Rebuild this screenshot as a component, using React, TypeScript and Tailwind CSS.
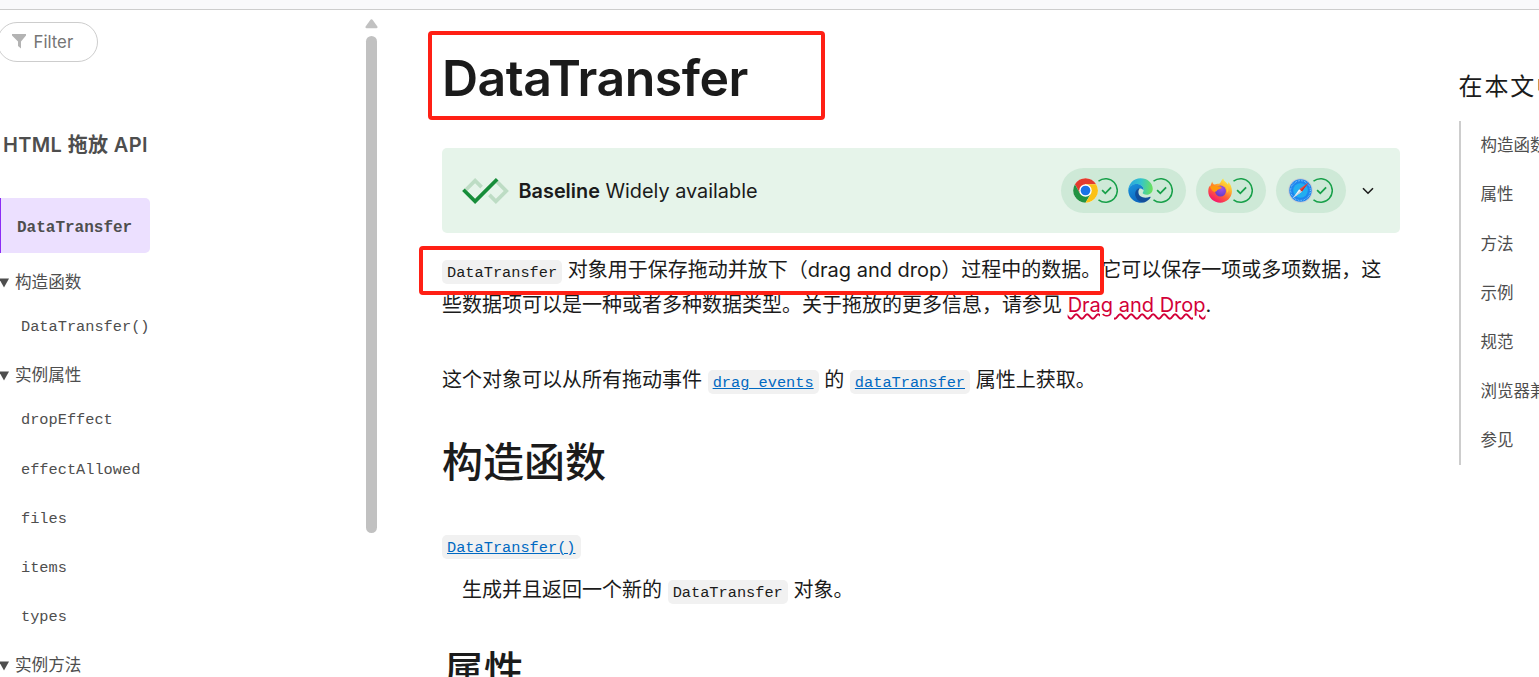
import React from 'react';

const TOC = ['构造函数', '属性', '方法', '示例', '规范', '浏览器兼容性', '参见'];

const SECTIONS = [
  { title: '构造函数', items: ['DataTransfer()'] },
  { title: '实例属性', items: ['dropEffect', 'effectAllowed', 'files', 'items', 'types'] },
  { title: '实例方法', items: [] },
];

const ChromeIcon = () => (
  <svg viewBox="0 0 48 48" className="size-[25px] shrink-0">
    <circle cx="24" cy="24" r="23.5" fill="#fff" />
    <path d="M24 12h20.4A23.5 23.5 0 0 0 3.7 12.2L13.6 30Z" fill="#e33b2e" />
    <path d="M13.6 30 3.7 12.2A23.5 23.5 0 0 0 24 47.5L34.4 30Z" fill="#229342" />
    <path d="M34.4 30 24 47.5A23.5 23.5 0 0 0 44.4 12H24Z" fill="#fbc116" />
    <circle cx="24" cy="24" r="12" fill="#fff" />
    <circle cx="24" cy="24" r="9.3" fill="#1a73e8" />
  </svg>
);

const EdgeIcon = () => (
  <svg viewBox="0 0 48 48" className="size-[25px] shrink-0">
    <defs>
      <linearGradient id="edgeTop" x1="0" y1="0.4" x2="1" y2="0.5">
        <stop offset="0" stopColor="#2aa5e0" />
        <stop offset="0.5" stopColor="#34c4cb" />
        <stop offset="1" stopColor="#6be25a" />
      </linearGradient>
      <linearGradient id="edgeLeft" x1="0" y1="0" x2="0.5" y2="1">
        <stop offset="0" stopColor="#1b95dd" />
        <stop offset="1" stopColor="#0c66c0" />
      </linearGradient>
    </defs>
    <path d="M0.500 24C1 11 11 0.500 24 0.500 38 0.500 47.500 10 47.500 20.500c0 7-5 11.500-11.500 11.500-5 0-8-1.500-8-3 0-1 2-2.500 2-6C30 16 24 12 16 12 9 12 3 16 0.500 24Z" fill="url(#edgeTop)" />
    <path d="M0.500 24C2 16 9 11.500 16 11.500c8 0 14 4.500 14 11.500-2-2-4-3-7-3-6 0-8 6-6 13 2 8 7 13 14 13.300A23.500 23.500 0 0 1 0.500 24Z" fill="url(#edgeLeft)" />
    <path d="M20 19.500c-5 3-8 9-5 17 3 7 9 10.500 16 10.500 6-2 10-5.500 12.500-10 .6-1-.5-1.500-1.500-1-10 4-22 1-22-9 0-3 1-5.500 2.500-7Z" fill="#124f9b" />
  </svg>
);

const FirefoxIcon = () => (
  <svg viewBox="0 0 48 48" className="size-[25px] shrink-0">
    <defs>
      <linearGradient id="foxBody" x1="0.8" y1="0.05" x2="0.25" y2="0.95">
        <stop offset="0" stopColor="#fff044" />
        <stop offset="0.3" stopColor="#ffb52e" />
        <stop offset="0.6" stopColor="#ff6536" />
        <stop offset="1" stopColor="#f5136f" />
      </linearGradient>
      <radialGradient id="foxGlobe" cx="0.6" cy="0.3" r="0.8">
        <stop offset="0" stopColor="#a052e8" />
        <stop offset="1" stopColor="#5c3bc4" />
      </radialGradient>
    </defs>
    <path d="M29 1c1 5 6 7 9 11 1-1 1-3 0.500-4.500C43 11 46 17 46 26 45.500 38 35.500 47.500 23.500 47.500S0.500 38 0.500 26C0.500 20 2 17 3.500 15l.5 2L8 6.500c.5 3 2 5 5 6 4-2 8-1 10-2.500C25 6 27 3 29 1Z" fill="url(#foxBody)" />
    <circle cx="24" cy="25" r="10.500" fill="url(#foxGlobe)" />
    <path d="M4 17c5-3 10-3 14-1 3 0 9 0 8 3-1 2-6 2-8 4-1 3-4 3-6 4-3-1-6-4-8-10Z" fill="#ff980e" />
    <path d="M30 14c5 3 8 8 6 15 5-4 5-12-1-17Z" fill="#ffc92e" />
  </svg>
);

const SafariIcon = () => (
  <svg viewBox="0 0 48 48" className="size-[25px] shrink-0">
    <circle cx="24" cy="24" r="23.5" fill="#c9ced4" />
    <circle cx="24" cy="24" r="21.5" fill="#1e86ee" />
    <circle cx="24" cy="24" r="19" fill="none" stroke="#a9dbff" strokeWidth="2" strokeDasharray="1 2" />
    <circle cx="24" cy="24" r="14" fill="#21aef0" />
    <path d="m39 9-17.500 12.500 5 5Z" fill="#f04a43" />
    <path d="m39 9-12.500 17.500-2.500-2.500Z" fill="#c9302c" />
    <path d="m9 39 12.500-17.500 5 5Z" fill="#f5f7fa" />
    <path d="m9 39 15-15 2.500 2.500Z" fill="#c5cdd6" />
  </svg>
);

// Check mark inside a ring that stays open where the browser logo sits
const CheckRing = () => (
  <svg viewBox="0 0 20 25" className="h-[25px] w-5 shrink-0" fill="none" stroke="#18a04a">
    <path d="M0.500 3.200A11.700 11.700 0 1 1 0.500 21.800" strokeWidth="1.500" />
    <path d="m4.100 12.200 3.200 3.100 5.800-6" strokeWidth="1.800" />
  </svg>
);

const Support = ({ children }: { children: React.ReactNode }) => (
  <span className="flex items-center">
    {children}
    <CheckRing />
  </span>
);

const Pill = ({ children }: { children: React.ReactNode }) => (
  <div className="flex h-[45px] items-center gap-[10px] rounded-full bg-[#cee9d7] pl-3 pr-[13px]">{children}</div>
);

const Code = ({ children, link }: { children: React.ReactNode; link?: boolean }) => (
  <code
    className={`inline-block h-6 rounded-[5px] bg-[#f1f1f1] px-[5px] font-['Liberation_Mono',monospace] text-[15.300px] leading-[27px] ${
      link ? 'text-[#0069c2] underline' : ''
    }`}
  >
    {children}
  </code>
);

const Sidebar = () => (
  <aside className="relative w-[442px] shrink-0 text-[#4e4e4e]">
    <div className="-ml-[3px] mt-3 flex h-10 w-[101px] items-center rounded-full border border-[#cdcdcd] pl-[14px]">
      <svg viewBox="0 0 14 15" className="mb-[2px] h-[15px] w-[14px]" fill="#b3b3b3">
        <path d="M0 0h14v1.500L9 7.500V14.500l-3-2.500V7.500L0 1.500Z" />
      </svg>
      <span className="ml-[7.500px] pt-[2px] text-[16.800px] text-[#757575]">Filter</span>
    </div>
    <h2 className="mt-[68px] pl-[3px] text-[20px] font-semibold leading-[30px] tracking-[0.350px]">HTML 拖放 API</h2>
    <div className="mt-[38px] flex h-[55px] w-[150px] items-center rounded-r-[5px] border-l border-[#8b2cf5] bg-[#ece0ff] pl-4 pt-[4px] font-['Liberation_Mono',monospace] text-[16px] font-bold">
      DataTransfer
    </div>
    <div className="pt-[5px]">
      {SECTIONS.map((section) => (
        <div key={section.title} className="mt-[3px]">
          <div className="flex h-[41px] items-center pt-[2px] text-[16.600px]">
            <svg viewBox="0 0 10 10" className="-ml-px mr-[6px] size-[10px]" fill="#4e4e4e">
              <path d="M0 0.500h10L5 9.500Z" />
            </svg>
            {section.title}
          </div>
          {section.items.map((item) => (
            <div
              key={item}
              className="flex h-[49.200px] items-center pl-[21px] pt-[2px] font-['Liberation_Mono',monospace] text-[15.300px]"
            >
              {item}
            </div>
          ))}
        </div>
      ))}
    </div>
    {/* Scrollbar */}
    <div className="absolute left-[365px] top-[9px] flex flex-col items-center">
      <svg viewBox="0 0 13 10" className="h-[10px] w-[13px]" fill="#c1c1c1">
        <path d="M6.500 0.300c.5 0 .9.200 1.200.6l4.700 6.700c.5.800 0 1.600-.9 1.600h-10c-.9 0-1.400-.8-.9-1.600L5.300.900c.3-.4.700-.6 1.200-.6Z" />
      </svg>
      <div className="mt-[7px] h-[497px] w-[11px] rounded-full bg-[#c1c1c1]" />
    </div>
  </aside>
);

const App: React.FC = () => {
  return (
    <div className="relative h-[677px] w-[1539px] overflow-hidden bg-white font-['Inter','Noto_Sans_CJK_SC',sans-serif] text-[#1b1b1b]">
      <header className="h-[10px] border-b border-[#cdcdcd] bg-[#f9f9fb]" />

      <div className="flex">
        <Sidebar />

        <main className="w-[958px] shrink-0 whitespace-nowrap text-[20px]">
          <h1 className="mt-[33px] h-[70px] text-[50px] font-semibold leading-[70px] tracking-[-0.500px]">DataTransfer</h1>

          <div className="mt-[35px] flex h-[85px] items-center rounded-[5px] bg-[#e6f4ea] px-5">
            <svg viewBox="0 0 540 300" className="h-[26px] w-[47px]">
              <path fill="#bddcc4" d="M420 30L390 60L480 150L390 240L330 180L300 210L390 300L540 150L420 30Z" />
              <path fill="#bddcc4" d="M150 0L30 120L60 150L150 60L210 120L240 90L150 0Z" />
              <path fill="#178d3a" d="M390 0L420 30L150 300L0 150L30 120L150 240L390 0Z" />
            </svg>
            <span className="ml-[9.500px] flex-1 pt-[2px] text-[19.850px]">
              <strong className="font-semibold">Baseline</strong> Widely available
            </span>
            <div className="flex items-center gap-[10px]">
              <Pill>
                <Support><ChromeIcon /></Support>
                <Support><EdgeIcon /></Support>
              </Pill>
              <Pill>
                <Support><FirefoxIcon /></Support>
              </Pill>
              <Pill>
                <Support><SafariIcon /></Support>
              </Pill>
            </div>
            <svg viewBox="0 0 12 8" className="ml-4 mr-[6px] h-2 w-3" fill="none" stroke="#1b1b1b" strokeWidth="1.600">
              <path d="m1 1.200 5 5 5-5" />
            </svg>
          </div>

          <p className="mt-5 leading-[35px]">
            <span className="block h-[35px]">
              <Code>DataTransfer</Code> 对象用于保存拖动并放下（drag and drop）过程中的数据。它可以保存一项或多项数据，这
            </span>
            <span className="block h-[35px]">
              些数据项可以是一种或者多种数据类型。关于拖放的更多信息，请参见{' '}
              <a className="text-[#d30038] underline decoration-wavy">Drag and Drop</a>.
            </span>
          </p>
          <p className="mt-10 h-[35px] leading-[35px]">
            这个对象可以从所有拖动事件 <Code link>drag events</Code> 的 <Code link>dataTransfer</Code> 属性上获取。
          </p>

          <h2 className="mt-[34px] h-[60px] text-[41px] font-medium leading-[60px]">构造函数</h2>
          <dl className="leading-[35px]">
            <dt className="mt-9 h-[35px]">
              <Code link>DataTransfer()</Code>
            </dt>
            <dd className="mt-[10px] h-[35px] pl-5">
              生成并且返回一个新的 <Code>DataTransfer</Code> 对象。
            </dd>
          </dl>
          <h2 className="mt-[33px] h-[60px] pl-[2px] text-[40px] font-medium leading-[60px]">属性</h2>
        </main>

        <nav className="ml-[59px] w-[160px] shrink-0 whitespace-nowrap">
          <h2 className="-ml-[0.500px] mt-[59px] h-9 text-[24px] leading-9 tracking-[1.900px]">在本文中</h2>
          <ul className="mt-[16px] border-l-2 border-[#cdcdcd] text-[16.500px] text-[#4e4e4e]">
            {TOC.map((item) => (
              <li key={item} className="flex h-[49.200px] items-center pl-[19.500px]">{item}</li>
            ))}
          </ul>
        </nav>
      </div>

      {/* Highlight frames */}
      <div className="absolute left-[428px] top-[31px] h-[89px] w-[397px] rounded-[4px] border-4 border-[#ff2015]" />
      <div className="absolute left-[419px] top-[246px] h-[49px] w-[685px] rounded-[4px] border-4 border-[#ff2015]" />
    </div>
  );
};

export default App;
